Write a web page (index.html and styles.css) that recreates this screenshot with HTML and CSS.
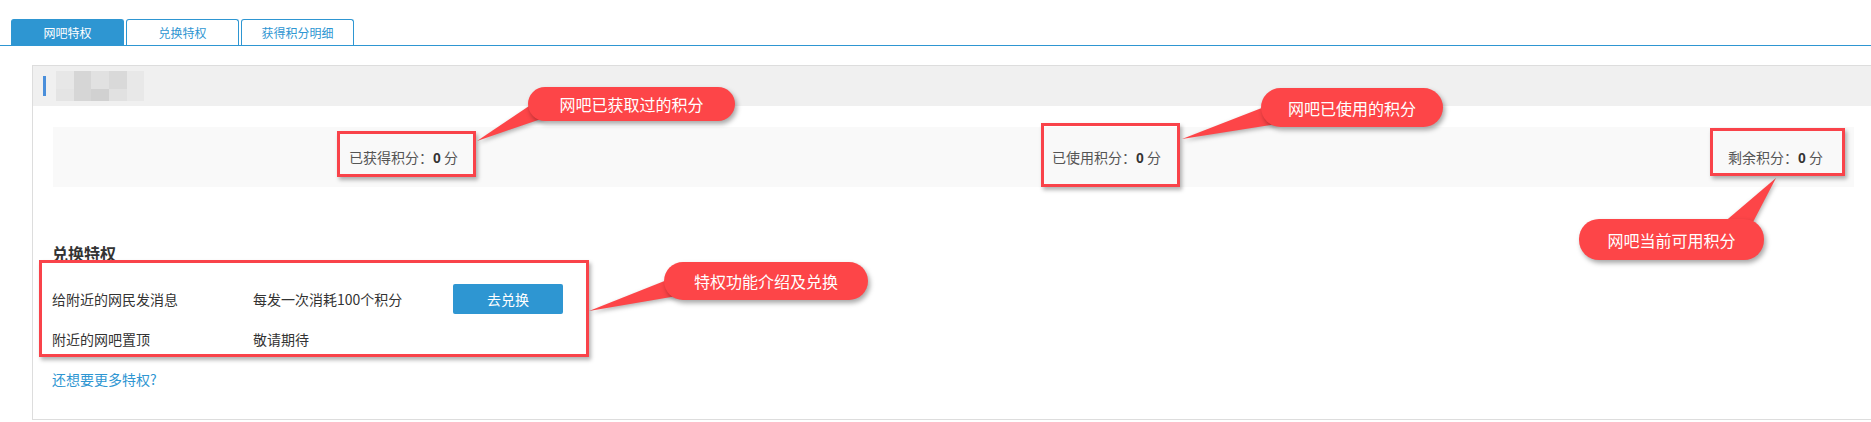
FILE: index.html
```html
<!DOCTYPE html>
<html lang="zh-CN">
<head>
    <meta charset="UTF-8">
    <meta name="viewport" content="width=device-width, initial-scale=1.0">
    <title>网吧特权</title>
    <link rel="stylesheet" href="styles.css">
</head>
<body>
    <div class="tabs">
        <a class="tab active">网吧特权</a>
        <a class="tab">兑换特权</a>
        <a class="tab">获得积分明细</a>
    </div>

    <div class="panel">
        <div class="panel-head">
            <span class="mark"></span>
            <div class="mosaic">
                <i class="c1"></i><i class="c2"></i><i class="c3"></i><i class="c4"></i><i class="c5"></i>
                <i class="c6"></i><i class="c2"></i><i class="c7"></i><i class="c3"></i><i class="c5"></i>
            </div>
        </div>

        <div class="stats">
            <div class="stat">已获得积分：<b>0</b> 分</div>
            <div class="stat">已使用积分：<b>0</b> 分</div>
            <div class="stat">剩余积分：<b>0</b> 分</div>
        </div>

        <div class="privs">
            <h3>兑换特权</h3>
            <div class="priv-row">
                <span class="name">给附近的网民发消息</span>
                <span class="desc">每发一次消耗100个积分</span>
                <button class="btn">去兑换</button>
            </div>
            <div class="priv-row">
                <span class="name">附近的网吧置顶</span>
                <span class="desc">敬请期待</span>
            </div>
            <a class="more">还想要更多特权?</a>
        </div>
    </div>

    <!-- 标注层 -->
    <div class="notes">
        <svg class="tails" width="1871" height="422">
            <polygon points="538,100 544,118 477,141" />
            <polygon points="1272,104 1277,124 1182,139" />
            <polygon points="1722,224 1752,224 1776,178" />
            <polygon points="672,278 677,296 589,311" />
        </svg>
        <div class="box" style="left: 337px; top: 131px; width: 139px; height: 46px;"></div>
        <div class="box" style="left: 1041px; top: 123px; width: 139px; height: 64px;"></div>
        <div class="box" style="left: 1710px; top: 128px; width: 135px; height: 48px;"></div>
        <div class="box" style="left: 39px; top: 260px; width: 550px; height: 97px;"></div>

        <div class="bubble" style="left: 528px; top: 87px; width: 207px; height: 34px;">网吧已获取过的积分</div>
        <div class="bubble" style="left: 1261px; top: 88px; width: 182px; height: 39px;">网吧已使用的积分</div>
        <div class="bubble" style="left: 1579px; top: 219px; width: 185px; height: 41px;">网吧当前可用积分</div>
        <div class="bubble" style="left: 664px; top: 262px; width: 204px; height: 38px;">特权功能介绍及兑换</div>
    </div>
</body>
</html>
```

FILE: styles.css
```css
body {
    margin: 0;
    overflow: hidden;
    position: relative;
    font-family: "Noto Sans CJK SC", "Noto Sans", sans-serif;
    color: #333;
    background-color: #fff;
}
.tabs {
    display: flex;
    gap: 2px;
    padding: 19px 0 0 11px;
    border-bottom: 1px solid #2e96d2;
}
.tab {
    box-sizing: border-box;
    width: 113px;
    height: 26px;
    border: 1px solid #2e96d2;
    border-bottom: none;
    border-radius: 3px 3px 0 0;
    font-size: 12px;
    line-height: 25px;
    text-align: center;
    color: #2e96d2;
    cursor: pointer;
}
.tab.active {
    background-color: #2e96d2;
    color: #fff;
}
.panel {
    box-sizing: border-box;
    height: 355px;
    margin: 19px -30px 0 32px;
    border: 1px solid #ddd;
}
.panel-head {
    display: flex;
    align-items: center;
    height: 40px;
    padding-left: 10px;
    background-color: #f0f0f0;
}
.mark {
    width: 3px;
    height: 20px;
    margin-right: 10px;
    background-color: #4a8fdb;
}
.mosaic {
    display: grid;
    grid-template-columns: 18px 17px 18px 18px 17px;
    grid-template-rows: 18px 12px;
}
.mosaic i { display: block; }
.mosaic .c1 { background-color: #e7e7e7; }
.mosaic .c2 { background-color: #d6d6d6; }
.mosaic .c3 { background-color: #e1e1e1; }
.mosaic .c4 { background-color: #d9d9d9; }
.mosaic .c5 { background-color: #e8e8e8; }
.mosaic .c6 { background-color: #e4e4e4; }
.mosaic .c7 { background-color: #d1d1d1; }
.stats {
    display: grid;
    grid-template-columns: 703px 676px auto;
    align-items: center;
    height: 60px;
    margin: 21px 46px 0 20px;
    padding-left: 296px;
    background-color: #f9f9f9;
    font-size: 14px;
    color: #555;
}
.stat b {
    font-family: "Liberation Sans", sans-serif;
    font-size: 14px;
    color: #333;
}
.privs {
    padding-left: 19px;
}
.privs h3 {
    margin: 56px 0 16px;
    font-size: 16px;
    line-height: 20px;
    font-weight: 600;
    color: #333;
}
.priv-row {
    display: grid;
    grid-template-columns: 201px 200px 110px;
    align-items: center;
    height: 40px;
    font-size: 14px;
    color: #333;
}
.btn {
    height: 30px;
    border: none;
    border-radius: 2px;
    background-color: #2e96d2;
    color: #fff;
    font-family: inherit;
    font-size: 14px;
    cursor: pointer;
}
.more {
    display: block;
    margin-top: 10px;
    font-size: 14px;
    line-height: 20px;
    color: #2e96d2;
    cursor: pointer;
}
.notes {
    position: absolute;
    top: 0;
    left: 0;
    width: 1871px;
    height: 422px;
    pointer-events: none;
}
.tails {
    position: absolute;
    top: 0;
    left: 0;
    filter: drop-shadow(1px 2px 2px rgba(0, 0, 0, 0.3));
}
.tails polygon {
    fill: #fd4548;
}
.box {
    position: absolute;
    box-sizing: border-box;
    border: 3px solid #f9434a;
    box-shadow: 2px 3px 4px rgba(0, 0, 0, 0.3);
}
.bubble {
    position: absolute;
    display: flex;
    align-items: center;
    justify-content: center;
    border-radius: 20px;
    background-color: #fd4548;
    box-shadow: 2px 3px 5px rgba(0, 0, 0, 0.35);
    color: #fff;
    font-size: 16px;
}
```
